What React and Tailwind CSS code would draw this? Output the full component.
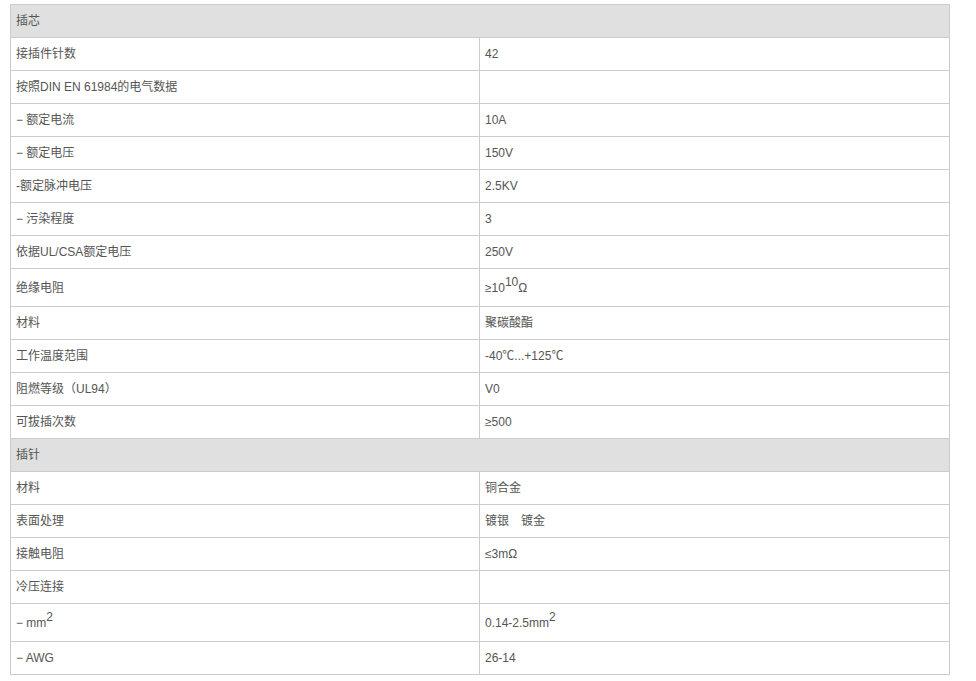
const rows = [
  { head: '插芯' },
  { k: '接插件针数', v: '42' },
  { k: '按照DIN EN 61984的电气数据', v: '' },
  { k: '− 额定电流', v: '10A' },
  { k: '− 额定电压', v: '150V' },
  { k: '-额定脉冲电压', v: '2.5KV' },
  { k: '− 污染程度', v: '3' },
  { k: '依据UL/CSA额定电压', v: '250V' },
  { k: '绝缘电阻', v: <>≥10<sup className="text-[12px] relative -top-[6px]">10</sup>Ω</>, tall: true },
  { k: '材料', v: '聚碳酸酯' },
  { k: '工作温度范围', v: '-40℃...+125℃' },
  { k: '阻燃等级（UL94）', v: 'V0' },
  { k: '可拔插次数', v: '≥500' },
  { head: '插针' },
  { k: '材料', v: '铜合金' },
  { k: '表面处理', v: '镀银　镀金' },
  { k: '接触电阻', v: '≤3mΩ' },
  { k: '冷压连接', v: '' },
  { k: <>− mm<sup className="text-[12px] relative -top-[6px]">2</sup></>, v: <>0.14-2.5mm<sup className="text-[12px] relative -top-[6px]">2</sup></>, tall: true },
  { k: '− AWG', v: '26-14' },
];

export default function App() {
  return (
    <div className="bg-white w-[976px] h-[681px] pt-[4px] pl-[10px]" style={{ fontFamily: '"Liberation Sans", Arial, "Noto Sans CJK SC", sans-serif' }}>
      <div className="w-[940px] border-l border-t border-[#cccccc] text-[12px] text-[#555555]">
        {rows.map((r, i) =>
          r.head ? (
            <div key={i} className="h-[33px] flex items-center px-[5px] bg-[#e0e0e0] border-r border-b border-[#cccccc]">
              {r.head}
            </div>
          ) : (
            <div key={i} className={`grid grid-cols-[469px_470px] ${r.tall ? 'h-[38px]' : 'h-[33px]'}`}>
              <div className="flex items-center px-[5px] border-r border-b border-[#cccccc]">{r.k}</div>
              <div className="flex items-center px-[5px] border-r border-b border-[#cccccc]">{r.v}</div>
            </div>
          )
        )}
      </div>
    </div>
  );
}
